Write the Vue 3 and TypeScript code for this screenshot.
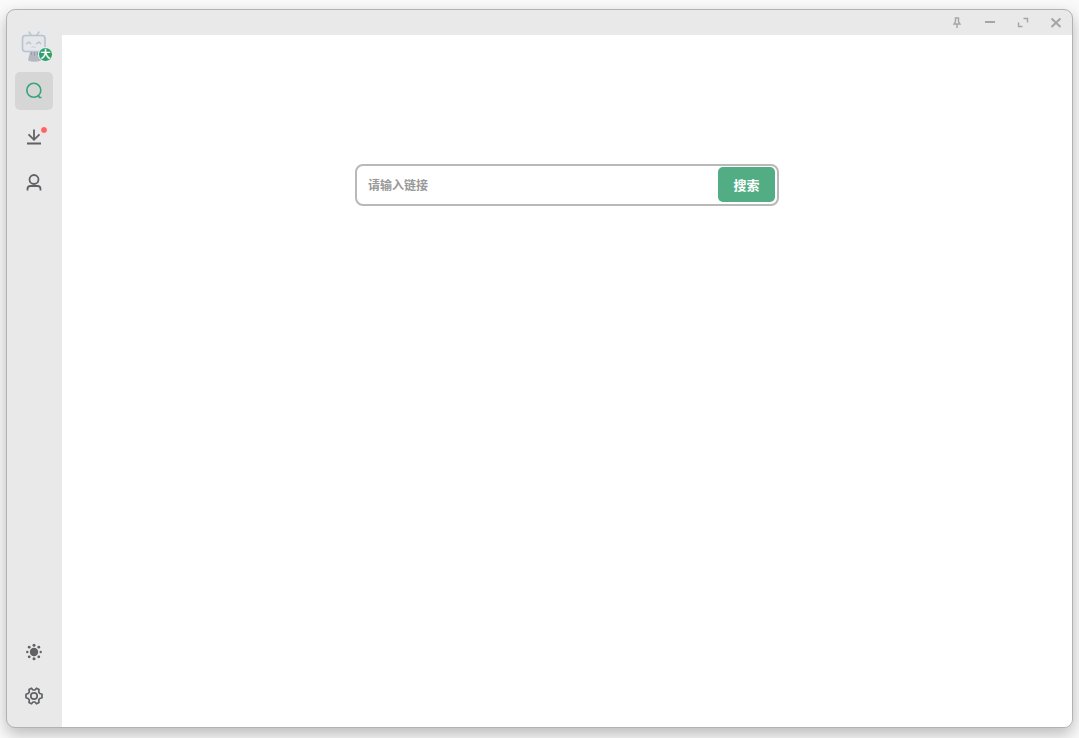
<script setup lang="ts">
import { ref } from 'vue'

type Page = 'search' | 'download' | 'user'

const page = ref<Page>('search')
const link = ref('')
const hasDownloads = ref(true)
</script>

<template>
  <div class="desktop">
    <div class="window">
      <aside class="sidebar">
        <button class="avatar" type="button" aria-label="账号">
          <svg class="avatar-face" viewBox="0 0 36 36" aria-hidden="true">
            <circle cx="18" cy="18" r="17" fill="#e6eaed" />
            <path d="M13 5l2.500 3.500M23 5l-2.500 3.500" stroke="#c0c6cd" stroke-width="1.500" stroke-linecap="round" />
            <rect x="6.500" y="8.500" width="22.500" height="16" rx="3" fill="#e4e7eb" stroke="#bcc2cb" stroke-width="1.600" />
            <path d="M10 17l3-2 2 2M20 17l3-2 2 2" fill="none" stroke="#b9c0c8" stroke-width="1.200" />
            <path d="M15.500 20.500q1-1.500 2 0q1-1.500 2 0" fill="none" stroke="#c4cad0" />
            <path d="M14 25h8.500l2.500 8.500q-7 2.500-13 0z" fill="#b4b8c0" />
            <path d="M15.500 25v3M18.500 25v4M21.500 25v3" stroke="#989ea8" />
          </svg>
          <span class="badge">大</span>
        </button>

        <nav class="nav" aria-label="主导航">
          <button class="item" :class="{ active: page === 'search' }" type="button" aria-label="搜索页" @click="page = 'search'">
            <svg viewBox="0 0 20 20" aria-hidden="true">
              <circle cx="9.800" cy="9.300" r="7" />
              <path d="M14 14l1.500 2.500h2" />
            </svg>
          </button>
          <button class="item" :class="{ active: page === 'download' }" type="button" aria-label="下载" @click="page = 'download'">
            <svg viewBox="0 0 20 20" aria-hidden="true">
              <path d="M10 2.500v10M4.500 7.300L10 12.800l5.500-5.500M3 16.500h14" />
            </svg>
            <span v-if="hasDownloads" class="dot"></span>
          </button>
          <button class="item" :class="{ active: page === 'user' }" type="button" aria-label="我的" @click="page = 'user'">
            <svg viewBox="0 0 20 20" aria-hidden="true">
              <circle cx="10" cy="6.500" r="4.500" />
              <path d="M3.500 17.500v-1.500q0-3 3-3h7q3 0 3 3v1.500" />
            </svg>
          </button>
        </nav>

        <div class="tools">
          <button class="item" type="button" aria-label="主题">
            <svg viewBox="0 0 20 20" aria-hidden="true">
              <g fill="#606266" stroke="none">
                <circle cx="10" cy="10" r="4.200" />
                <circle cx="10" cy="3.300" r="1.500" />
                <circle cx="10" cy="16.700" r="1.500" />
                <circle cx="3.300" cy="10" r="1.200" />
                <circle cx="16.700" cy="10" r="1.200" />
                <circle cx="5.200" cy="5.200" r="1.400" />
                <circle cx="14.800" cy="5.200" r="1.400" />
                <circle cx="5.200" cy="14.800" r="1.400" />
                <circle cx="14.800" cy="14.800" r="1.400" />
              </g>
            </svg>
          </button>
          <button class="item" type="button" aria-label="设置">
            <svg viewBox="0 0 20 20" aria-hidden="true">
              <path
                class="gear"
                d="M5 3.500L7.500 2.200L9 4H11L12.500 2.200L15 3.500L14.700 6L15.800 7.500L18 8.200V11.800L15.800 12.500L14.700 14L15 16.500L12.500 17.800L11 16H9L7.500 17.800L5 16.500L5.300 14L4.200 12.500L2 11.800V8.200L4.200 7.500L5.300 6z"
              />
              <circle class="gear" cx="10" cy="10" r="3.200" />
            </svg>
          </button>
        </div>
      </aside>

      <div class="body">
        <header class="titlebar">
          <button type="button" aria-label="置顶">
            <svg viewBox="0 0 14 14" aria-hidden="true">
              <path d="M5.500 2h3v3.500L10 8H4l1.500-2.500zM7 8v4" />
            </svg>
          </button>
          <button type="button" aria-label="最小化">
            <svg viewBox="0 0 14 14" aria-hidden="true"><path class="bold" d="M2 6h10" /></svg>
          </button>
          <button type="button" aria-label="最大化">
            <svg viewBox="0 0 14 14" aria-hidden="true"><path d="M7.500 2.500h4v4M2.500 6.500v4h4" /></svg>
          </button>
          <button type="button" aria-label="关闭">
            <svg viewBox="0 0 14 14" aria-hidden="true"><path class="bold" d="M2.500 2.500l9 8.500M11.500 2.500l-9 8.500" /></svg>
          </button>
        </header>
        <main class="content">
          <form class="search" @submit.prevent>
            <input v-model="link" type="text" placeholder="请输入链接" aria-label="链接" />
            <button type="submit">搜索</button>
          </form>
        </main>
      </div>
    </div>
  </div>
</template>

<style>
body {
  margin: 0;
  background: #fafafa;
}
</style>

<style scoped>
.desktop {
  box-sizing: border-box;
  height: 100vh;
  padding: 9px 6px 10px;
  overflow: hidden;
  font-family: "Liberation Sans", "Noto Sans CJK SC", sans-serif;
}

.window {
  box-sizing: border-box;
  display: flex;
  height: 100%;
  overflow: hidden;
  border: 1px solid #b2b2b2;
  border-radius: 9px;
  background: #e9e9e9;
  box-shadow: 0 6px 16px rgba(0, 0, 0, 0.26);
}

button {
  padding: 0;
  border: 0;
  background: none;
  font-family: inherit;
  cursor: pointer;
}

svg {
  display: block;
}

.sidebar {
  box-sizing: border-box;
  display: flex;
  flex: 0 0 55px;
  flex-direction: column;
  align-items: center;
  padding: 17px 1px 12px 0;
}

.avatar {
  position: relative;
  width: 36px;
  height: 36px;
}

.avatar-face {
  width: 36px;
  height: 36px;
}

.badge {
  box-sizing: border-box;
  position: absolute;
  right: -1px;
  bottom: 1px;
  width: 15px;
  height: 15px;
  border: 1px solid #f5f8f6;
  border-radius: 50%;
  background: #2f9e6c;
  color: #fff;
  font-size: 10px;
  font-weight: 700;
  line-height: 14px;
  text-align: center;
}

.nav,
.tools {
  display: flex;
  flex-direction: column;
}

.nav {
  gap: 8px;
  margin-top: 9px;
}

.tools {
  gap: 6px;
  margin-top: auto;
}

.item {
  position: relative;
  display: grid;
  place-items: center;
  width: 38px;
  height: 38px;
  border-radius: 5px;
}

.item svg {
  width: 20px;
  height: 20px;
  fill: none;
  stroke: #606266;
  stroke-width: 1.8;
}

.item.active {
  background: #d6d6d6;
}

.item.active svg {
  stroke: #36a478;
  stroke-width: 1.6;
}

.item .gear {
  stroke-width: 1.7;
  stroke-linejoin: round;
}

.dot {
  position: absolute;
  top: 8px;
  right: 5px;
  width: 6px;
  height: 6px;
  border: 1px solid #f6eeee;
  border-radius: 50%;
  background: #fa6464;
}

.body {
  display: flex;
  flex: 1;
  flex-direction: column;
  min-width: 0;
}

.titlebar {
  display: flex;
  flex: 0 0 25px;
  align-items: center;
  justify-content: flex-end;
  gap: 19px;
  padding-right: 9px;
}

.titlebar svg {
  width: 14px;
  height: 14px;
  fill: none;
  stroke: #a5a5a5;
  stroke-width: 1.4;
}

.titlebar .bold {
  stroke-width: 2;
}

.content {
  flex: 1;
  padding: 129px 20px 20px;
  background: #fff;
}

.search {
  box-sizing: border-box;
  display: flex;
  max-width: 424px;
  height: 42px;
  margin: 0 auto;
  padding: 1px 2px 2px 0;
  border: 2px solid #b9b9b9;
  border-radius: 8px;
}

.search input {
  flex: 1;
  min-width: 0;
  padding: 2px 11px 0;
  border: 0;
  outline: 0;
  background: none;
  color: #606266;
  font-family: inherit;
  font-size: 12px;
  font-weight: 700;
}

.search input::placeholder {
  color: #999;
  opacity: 1;
}

.search button {
  width: 57px;
  border-radius: 5px;
  background: #52ad84;
  color: #fff;
  font-size: 13px;
  font-weight: 700;
}
</style>
